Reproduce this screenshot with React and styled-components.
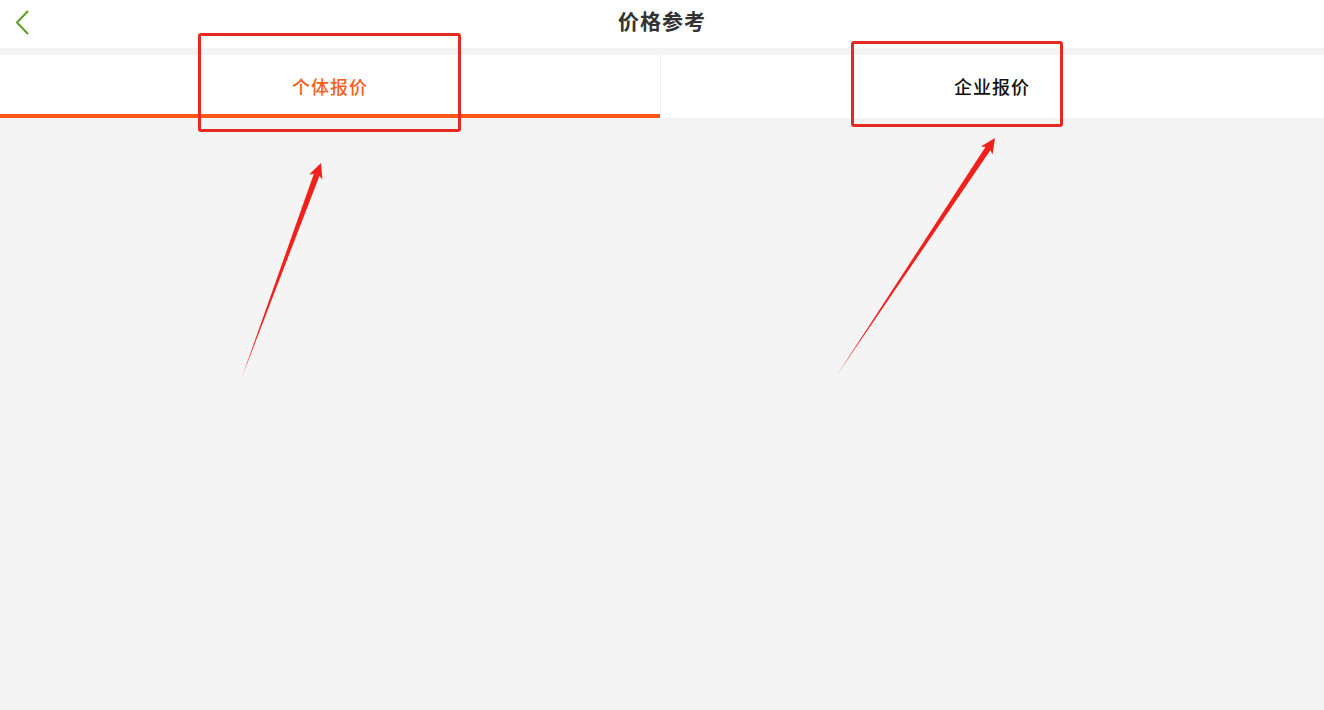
import React from "react";
import styled, { createGlobalStyle } from "styled-components";

const Global = createGlobalStyle`
  html, body { margin: 0; padding: 0; }
  body {
    background: #f4f4f4;
    font-family: "Noto Sans CJK SC", "Noto Sans", sans-serif;
  }
`;

const Page = styled.div`
  position: relative;
  width: 1324px;
  height: 710px;
  background: #f4f4f4;
  display: flex;
  flex-direction: column;
  overflow: hidden;
`;

const Header = styled.header`
  position: relative;
  height: 48px;
  background: #ffffff;
  display: flex;
  align-items: center;
  justify-content: center;
  flex-shrink: 0;
`;

const Back = styled.button`
  position: absolute;
  left: 10px;
  top: 7px;
  width: 24px;
  height: 30px;
  padding: 0;
  border: none;
  background: transparent;
  display: flex;
  align-items: center;
  justify-content: center;
`;

const Title = styled.h1`
  margin: 0;
  font-size: 21px;
  font-weight: 700;
  color: #333333;
  letter-spacing: 1px;
  line-height: 1;
  transform: translateY(-4px);
`;

const Gap = styled.div`
  height: 7px;
  flex-shrink: 0;
`;

const Tabs = styled.nav`
  display: grid;
  grid-template-columns: 660px 1fr;
  height: 63px;
  background: #ffffff;
  flex-shrink: 0;
`;

const Tab = styled.div`
  position: relative;
  display: flex;
  align-items: center;
  justify-content: center;
  font-size: 18px;
  font-weight: 500;
  letter-spacing: 1px;
  line-height: 1;
  color: ${(p) => (p.$active ? "#f0611e" : "#111111")};
  box-shadow: ${(p) => (p.$active ? "inset 0 -4px 0 #f95717" : "none")};

  &::before {
    content: "";
    display: ${(p) => (p.$divider ? "block" : "none")};
    position: absolute;
    left: 0;
    top: 0;
    bottom: 4px;
    width: 1px;
    background: #eeeeee;
  }
`;

const Label = styled.span`
  transform: translate(${(p) => p.$dx || 0}px, -1px);
`;

const Body = styled.main`
  flex: 1;
  background: #f4f4f4;
`;

const Box = styled.div`
  position: absolute;
  border: 3px solid #e62a22;
  border-radius: 3px;
  box-sizing: border-box;
  pointer-events: none;
`;

const ArrowLayer = styled.svg`
  position: absolute;
  left: 0;
  top: 0;
  pointer-events: none;
`;

function arrowPolys(tx, ty, px, py) {
  const dx = px - tx;
  const dy = py - ty;
  const len = Math.hypot(dx, dy);
  const ux = dx / len;
  const uy = dy / len;
  const nx = -uy;
  const ny = ux;
  const headLen = 15;
  const headW = 14;
  const shaftW = 6;
  const bx = px - ux * headLen;
  const by = py - uy * headLen;
  const nbx = px - ux * (headLen - 4);
  const nby = py - uy * (headLen - 4);
  const f = (v) => v.toFixed(1);
  const shaft = [
    [tx, ty],
    [nbx + (nx * shaftW) / 2, nby + (ny * shaftW) / 2],
    [nbx - (nx * shaftW) / 2, nby - (ny * shaftW) / 2],
  ]
    .map((p) => `${f(p[0])},${f(p[1])}`)
    .join(" ");
  const head = [
    [px, py],
    [bx + (nx * headW) / 2, by + (ny * headW) / 2],
    [nbx, nby],
    [bx - (nx * headW) / 2, by - (ny * headW) / 2],
  ]
    .map((p) => `${f(p[0])},${f(p[1])}`)
    .join(" ");
  return { shaft, head };
}

function Arrow({ from, to }) {
  const { shaft, head } = arrowPolys(from[0], from[1], to[0], to[1]);
  return (
    <g fill="#f2201a">
      <polygon points={shaft} />
      <polygon points={head} />
    </g>
  );
}

export default function App() {
  return (
    <>
      <Global />
      <Page>
        <Header>
          <Back aria-label="back">
            <svg width="16" height="26" viewBox="0 0 16 26">
              <path
                d="M14 2 L3 13.5 L14 25"
                fill="none"
                stroke="#5e9c22"
                strokeWidth="2"
              />
            </svg>
          </Back>
          <Title>价格参考</Title>
        </Header>
        <Gap />
        <Tabs>
          <Tab $active>
            <Label>个体报价</Label>
          </Tab>
          <Tab $divider>
            <Label>企业报价</Label>
          </Tab>
        </Tabs>
        <Body />

        <Box style={{ left: 198, top: 33, width: 263, height: 99 }} />
        <Box style={{ left: 851, top: 41, width: 212, height: 86 }} />
        <ArrowLayer width="1324" height="710" viewBox="0 0 1324 710">
          <Arrow from={[242, 377]} to={[321, 163]} />
          <Arrow from={[837, 375]} to={[995, 138]} />
        </ArrowLayer>
      </Page>
    </>
  );
}
